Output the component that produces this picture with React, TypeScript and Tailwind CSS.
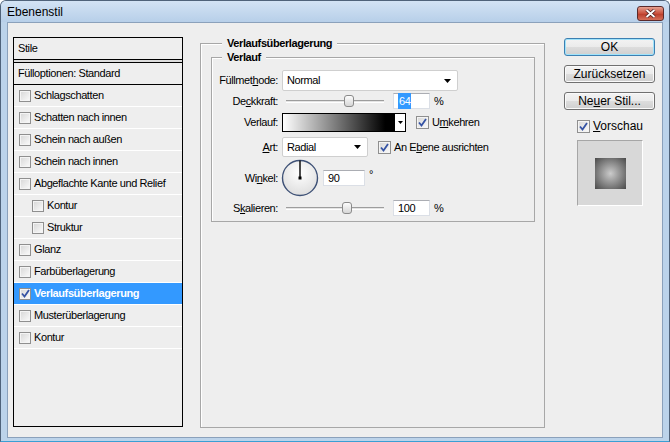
import React from 'react';

type StyleItem = { label: string; indent?: boolean; checked?: boolean; active?: boolean };

const styleItems: StyleItem[] = [
  { label: 'Schlagschatten' },
  { label: 'Schatten nach innen' },
  { label: 'Schein nach außen' },
  { label: 'Schein nach innen' },
  { label: 'Abgeflachte Kante und Relief' },
  { label: 'Kontur', indent: true },
  { label: 'Struktur', indent: true },
  { label: 'Glanz' },
  { label: 'Farbüberlagerung' },
  { label: 'Verlaufsüberlagerung', checked: true, active: true },
  { label: 'Musterüberlagerung' },
  { label: 'Kontur' },
];

function CheckBox({ checked = false, small = false }: { checked?: boolean; small?: boolean }) {
  return (
    <span
      className={
        (small ? 'w-[12px] h-[12px] ' : 'w-[13px] h-[13px] ') +
        'shrink-0 inline-flex items-center justify-center border border-[#8f8f8f] bg-[linear-gradient(135deg,#d6d6d6,#fbfbfb)] shadow-[inset_0_0_0_1px_#f4f4f4]'
      }
    >
      {checked && (
        <svg width="9" height="9" viewBox="0 0 9 9">
          <path d="M1 4.5 L3.5 7.5 L8 1" fill="none" stroke="#3553a4" strokeWidth="1.8" />
        </svg>
      )}
    </span>
  );
}

function Arrow() {
  return (
    <svg width="7" height="4" viewBox="0 0 7 4" className="shrink-0">
      <path d="M0 0 H7 L3.5 4 Z" fill="#000" />
    </svg>
  );
}

function Select({ value, width }: { value: string; width: string }) {
  return (
    <div
      className={
        width +
        ' h-full flex items-center justify-between pl-[4px] pr-[6px] bg-white border border-[#cfcfcf] rounded-[2px] text-[11px]'
      }
    >
      <span>{value}</span>
      <Arrow />
    </div>
  );
}

function Slider({ pct }: { pct: number }) {
  return (
    <div className="relative w-[98px] h-[14px] flex items-center">
      <div className="w-full h-[3px] border-t border-[#9d9d9d] border-b border-b-white bg-[#e4e4e4]" />
      <div
        className="absolute top-[1px] w-[10px] h-[12px] rounded-[3px] border border-[#8a8a8a] bg-[linear-gradient(#fdfdfd,#d6d6d6)]"
        style={{ left: `calc(${pct}% - 5px)` }}
      />
    </div>
  );
}

function TextBox({ children, width }: { children: React.ReactNode; width: string }) {
  return (
    <div
      className={
        width +
        ' h-[16px] flex items-center pl-[4px] bg-white border border-[#dbdfe6] border-t-[#abadb3] text-[11px]'
      }
    >
      {children}
    </div>
  );
}

function Button({ children, primary = false }: { children: React.ReactNode; primary?: boolean }) {
  return (
    <div
      className={
        'w-[91px] h-[18px] flex items-center justify-center rounded-[3px] text-[12px] tracking-normal bg-[linear-gradient(#f3f3f3_0%,#ebebeb_50%,#dddddd_51%,#cfcfcf_100%)] ' +
        (primary
          ? 'border border-[#3c7fb1] shadow-[inset_0_0_0_1px_#9fe3fb]'
          : 'border border-[#707070] shadow-[inset_0_0_0_1px_#fafafa]')
      }
    >
      {children}
    </div>
  );
}

function Dial() {
  return (
    <svg width="38" height="38" viewBox="0 0 38 38" className="-ml-[1px]">
      <defs>
        <radialGradient id="dialFill" cx="50%" cy="35%" r="65%">
          <stop offset="0%" stopColor="#ffffff" />
          <stop offset="100%" stopColor="#dedede" />
        </radialGradient>
      </defs>
      <circle cx="19" cy="19" r="17.5" fill="url(#dialFill)" stroke="#3f5277" strokeWidth="1.4" />
      <line x1="19" y1="19" x2="19" y2="1.5" stroke="#000" strokeWidth="1.4" />
      <rect x="17.5" y="17.5" width="3" height="3" fill="#000" />
    </svg>
  );
}

function Label({ children }: { children: React.ReactNode }) {
  return <div className="w-[66px] text-right text-[11px] shrink-0">{children}</div>;
}

export default function App() {
  return (
    <div className="w-[670px] h-[442px] flex flex-col bg-[#bcd3ea] border border-[#50637a] border-b-[#3a9fd4] rounded-t-[6px] overflow-hidden font-['Liberation_Sans',Arial,sans-serif] text-black tracking-[-0.4px]">
      {/* title bar */}
      <div className="h-[21px] shrink-0 flex items-center justify-between pl-[6px] pr-[5px] bg-[linear-gradient(#d3e3f4,#b7cfe9)]">
        <span className="text-[12px] tracking-normal">Ebenenstil</span>
        <div className="w-[27px] h-[15px] mt-[3px] flex items-center justify-center rounded-[3px] border border-[#5b2a2a] bg-[linear-gradient(#e7a291,#c9503c_50%,#b93a28_51%,#d5705a)]">
          <svg width="11" height="9" viewBox="0 0 11 9">
            <path d="M1.5 1 L9.5 8 M9.5 1 L1.5 8" stroke="#4a1d1d" strokeWidth="3.4" />
            <path d="M1.5 1 L9.5 8 M9.5 1 L1.5 8" stroke="#ffffff" strokeWidth="1.8" />
          </svg>
        </div>
      </div>

      {/* client area */}
      <div className="flex-1 mx-[6px] mb-[3px] bg-[#eeeeee] border border-[#8ba1bb] flex pl-[5px] pt-[14px]">
        {/* styles list */}
        <div className="w-[170px] h-[390px] border border-black text-[11px] flex flex-col">
          <div className="h-[22px] shrink-0 flex items-center pl-[4px] border-b border-black">Stile</div>
          <div className="h-[2px] shrink-0 bg-[#dcdcdc]" />
          <div className="h-[23px] shrink-0 flex items-center pl-[4px] border-y border-black">
            Fülloptionen: Standard
          </div>
          {styleItems.map((it, i) => (
            <div
              key={i}
              className={
                'h-[22px] shrink-0 flex items-center border-b border-white ' +
                (it.indent ? 'pl-[18px] ' : 'pl-[5px] ') +
                (it.active ? 'bg-[#3399ff] text-white font-bold' : '')
              }
            >
              <CheckBox small checked={it.checked} />
              <span className="ml-[3px]">{it.label}</span>
            </div>
          ))}
        </div>

        {/* settings */}
        <fieldset className="ml-[17px] w-[345px] h-[391px] border border-[#a7a7a7] shadow-[inset_1px_1px_0_#ffffff] pl-[10px] pr-[9px] pt-[1px]">
          <legend className="ml-[11px] px-[5px] text-[11px] leading-[13px] font-bold bg-[#eeeeee]">
            Verlaufsüberlagerung
          </legend>
          <fieldset className="w-[324px] border border-[#a7a7a7] shadow-[inset_1px_1px_0_#ffffff] pt-[5px] pb-[3px]">
            <legend className="ml-[10px] px-[5px] text-[11px] leading-[13px] font-bold bg-[#eeeeee]">Verlauf</legend>

            <div className="h-[23px] flex items-center">
              <Label>
                Füllmet<span className="underline">h</span>ode:
              </Label>
              <div className="ml-[4px] h-[21px]">
                <Select value="Normal" width="w-[176px]" />
              </div>
            </div>

            <div className="h-[18px] flex items-center">
              <Label>
                De<span className="underline">c</span>kkraft:
              </Label>
              <div className="ml-[8px]">
                <Slider pct={64} />
              </div>
              <div className="ml-[9px]">
                <TextBox width="w-[37px]">
                  <span className="bg-[#3399ff] text-white px-[1px]">64</span>
                </TextBox>
              </div>
              <span className="ml-[4px] text-[11px]">%</span>
            </div>

            <div className="mt-[2px] h-[20px] flex items-center">
              <Label>Verlauf:</Label>
              <div className="ml-[4px] w-[124px] h-[19px] flex border border-black">
                <div className="flex-1 bg-[linear-gradient(to_right,#ffffff,#000000_92%)]" />
                <div className="w-[11px] flex items-center justify-center bg-white border-l border-black">
                  <svg width="5" height="3" viewBox="0 0 5 3">
                    <path d="M0 0 H5 L2.5 3 Z" fill="#000" />
                  </svg>
                </div>
              </div>
              <div className="ml-[10px] flex items-center">
                <CheckBox checked />
                <span className="ml-[3px] text-[11px]">
                  U<span className="underline">m</span>kehren
                </span>
              </div>
            </div>

            <div className="mt-[4px] h-[22px] flex items-center">
              <Label>
                <span className="underline">A</span>rt:
              </Label>
              <div className="ml-[4px] h-[20px]">
                <Select value="Radial" width="w-[86px]" />
              </div>
              <div className="ml-[10px] flex items-center">
                <CheckBox checked />
                <span className="ml-[3px] text-[11px]">
                  An E<span className="underline">b</span>ene ausrichten
                </span>
              </div>
            </div>

            <div className="h-[40px] flex items-center">
              <Label>
                Wi<span className="underline">n</span>kel:
              </Label>
              <div className="ml-[4px] flex items-center">
                <Dial />
              </div>
              <div className="ml-[4px]">
                <TextBox width="w-[42px]">90</TextBox>
              </div>
              <span className="ml-[4px] -mt-[7px] text-[11px]">°</span>
            </div>

            <div className="h-[20px] flex items-center">
              <Label>
                S<span className="underline">k</span>alieren:
              </Label>
              <div className="ml-[8px]">
                <Slider pct={62} />
              </div>
              <div className="ml-[9px]">
                <TextBox width="w-[37px]">100</TextBox>
              </div>
              <span className="ml-[4px] text-[11px]">%</span>
            </div>
          </fieldset>
        </fieldset>

        {/* buttons */}
        <div className="ml-[19px] mt-[1px] flex flex-col">
          <Button primary>OK</Button>
          <div className="mt-[9px]">
            <Button>Zurücksetzen</Button>
          </div>
          <div className="mt-[9px]">
            <Button>
              Ne<span className="underline">u</span>er Stil...
            </Button>
          </div>
          <div className="mt-[9px] h-[14px] flex items-center pl-[13px]">
            <CheckBox checked />
            <span className="ml-[3px] text-[12px] tracking-normal">
              <span className="underline">V</span>orschau
            </span>
          </div>
          <div className="mt-[7px] ml-[13px] w-[66px] h-[66px] flex items-center justify-center bg-[#d8d8d8] border border-[#a6a6a6] border-r-white border-b-white">
            <div className="w-[31px] h-[31px] bg-[radial-gradient(circle_farthest-corner,#cbcbcb,#494949)]" />
          </div>
        </div>
      </div>
    </div>
  );
}
